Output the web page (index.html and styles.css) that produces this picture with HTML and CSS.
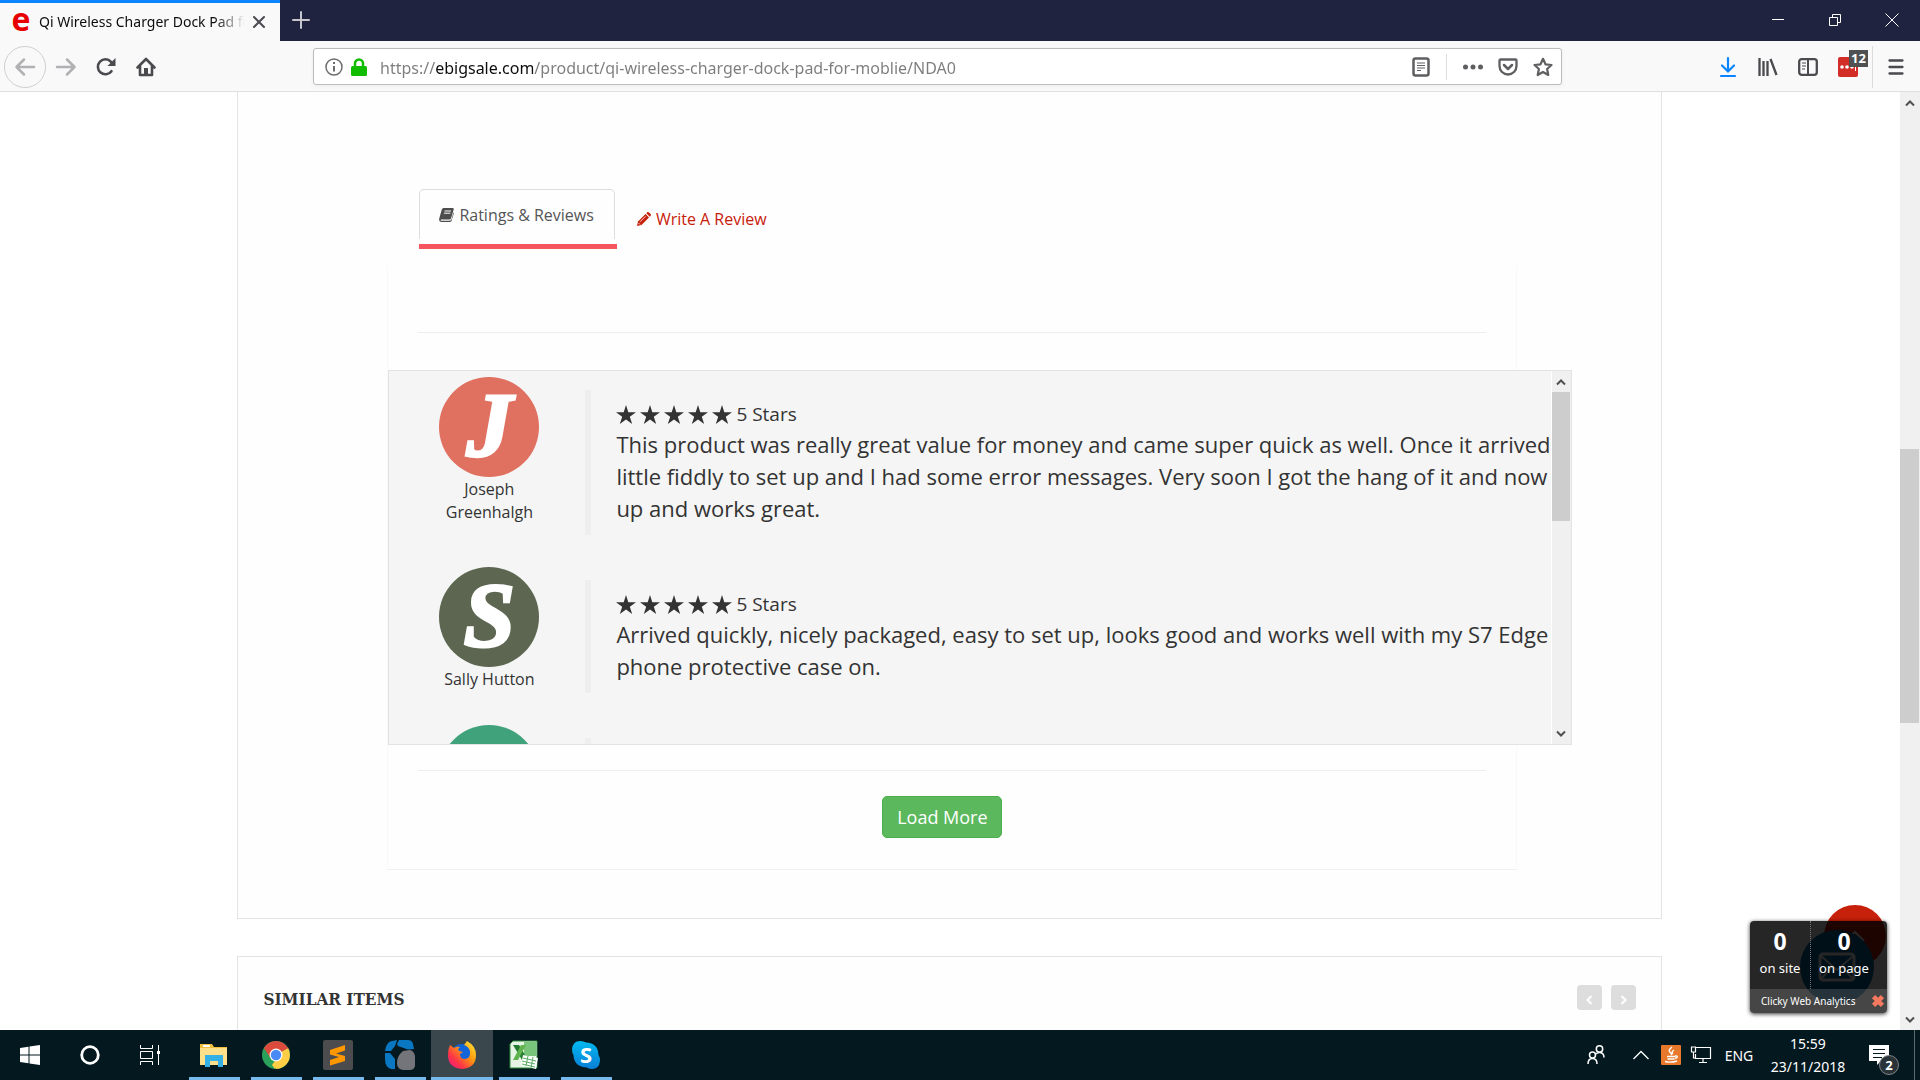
FILE: index.html
```
<!DOCTYPE html>
<html lang="en">
<head>
    <meta charset="UTF-8">
    <title>Qi Wireless Charger Dock Pad for Moblie</title>
    <link rel="stylesheet" href="styles.css">
</head>
<body>
    <svg class="sprites" aria-hidden="true">
        <symbol id="star" viewBox="0 0 20 20"><path d="M10 0l2.300 7.300H20l-6.200 4.400L16.200 19 10 14.500 3.800 19l2.400-7.300L0 7.300h7.700z"/></symbol>
        <symbol id="up" viewBox="0 0 10 8"><path d="M1 6.500l4-4 4 4" fill="none" stroke="#505050" stroke-width="2"/></symbol>
        <symbol id="down" viewBox="0 0 10 8"><path d="M1 1.500l4 4 4-4" fill="none" stroke="#505050" stroke-width="2"/></symbol>
    </svg>

    <!-- browser window -->
    <header class="titlebar">
        <div class="tab">
            <svg class="favicon" width="18" height="22" viewBox="0 0 18 22"><text x="9" y="20" text-anchor="middle">e</text></svg>
            <span class="tab-title">Qi Wireless Charger Dock Pad for</span>
            <button class="tab-close" aria-label="Close tab"><svg width="14" height="14" viewBox="0 0 14 14"><path d="M2 2l10 10M12 2L2 12" stroke="#4a4a4f" stroke-width="2" stroke-linecap="round"/></svg></button>
        </div>
        <button class="tab-new" aria-label="New tab"><svg width="20" height="20" viewBox="0 0 20 20"><path d="M10 2v16M2 10h16" stroke="#c6c6cc" stroke-width="2" stroke-linecap="round"/></svg></button>
        <div class="window-btns">
            <button aria-label="Minimize"><svg width="14" height="14" viewBox="0 0 14 14"><path d="M1 6.500h12" stroke="#fff"/></svg></button>
            <button aria-label="Restore"><svg width="14" height="14" viewBox="0 0 14 14"><path d="M1.500 4.500h8v8h-8zM4.500 4V1.500h8v8H10" fill="none" stroke="#fff"/></svg></button>
            <button aria-label="Close"><svg width="14" height="14" viewBox="0 0 14 14"><path d="M.5.5l13 13M13.500.5l-13 13" stroke="#fff"/></svg></button>
        </div>
    </header>

    <nav class="toolbar">
        <div class="nav-btns">
            <button class="back" aria-label="Back"><svg width="22" height="20" viewBox="0 0 22 20"><path d="M20 10H3M10 2.500L2.500 10l7.500 7.500" fill="none" stroke="#b1b1b3" stroke-width="2.500" stroke-linecap="round" stroke-linejoin="round"/></svg></button>
            <button aria-label="Forward"><svg width="22" height="20" viewBox="0 0 22 20"><path d="M2 10h17M12 2.500l7.500 7.500-7.500 7.500" fill="none" stroke="#b1b1b3" stroke-width="2.500" stroke-linecap="round" stroke-linejoin="round"/></svg></button>
            <button aria-label="Reload"><svg width="20" height="20" viewBox="0 0 20 20"><path d="M15.500 14.200A7.500 7.500 0 1 1 15 4.800" fill="none" stroke="#4a4a4f" stroke-width="2.600" stroke-linecap="round"/><path d="M19.500 1v8h-8z" fill="#4a4a4f"/></svg></button>
            <button aria-label="Home"><svg width="20" height="20" viewBox="0 0 20 20"><path d="M1.500 10.500L10 2l8.500 8.500M4 9.500V18h12V9.500" fill="none" stroke="#4a4a4f" stroke-width="2.600" stroke-linejoin="round" stroke-linecap="round"/><path d="M8 11h4v7H8z" fill="#4a4a4f"/></svg></button>
        </div>
        <div class="urlbar">
            <svg width="18" height="18" viewBox="0 0 18 18"><circle cx="9" cy="9" r="8" fill="none" stroke="#6d6d6f" stroke-width="1.500"/><path d="M9 8v5.500M9 4v2" stroke="#6d6d6f" stroke-width="2"/></svg>
            <svg class="lock" width="16" height="18" viewBox="0 0 16 18"><path d="M4 9V5.500a4 4 0 0 1 8 0V9" fill="none" stroke="#12bc00" stroke-width="2.500"/><rect y="8" width="16" height="10" rx="1.500" fill="#12bc00"/></svg>
            <input class="url" type="text" aria-label="Address" value="https://ebigsale.com/product/qi-wireless-charger-dock-pad-for-moblie/NDA0">
            <button aria-label="Reader view"><svg width="18" height="20" viewBox="0 0 18 20"><rect x="1.500" y="1.500" width="15" height="17" rx="2" fill="none" stroke="#5f5f62" stroke-width="2.500"/><path d="M5 6h8M5 8.500h8M5 11h8M5 13.500h4" stroke="#5f5f62"/></svg></button>
            <span class="url-sep"></span>
            <button aria-label="Page actions"><svg width="20" height="6" viewBox="0 0 20 6"><g fill="#5f5f62"><circle cx="2.500" cy="3" r="2.500"/><circle cx="10" cy="3" r="2.500"/><circle cx="17.500" cy="3" r="2.500"/></g></svg></button>
            <button aria-label="Save to Pocket"><svg width="20" height="18" viewBox="0 0 20 18"><path d="M2.500 1.500h15q1 0 1 1V8a8.500 8.500 0 0 1-17 0V2.500q0-1 1-1z" fill="none" stroke="#5f5f62" stroke-width="2.300"/><path d="M6 7l4 4 4-4" fill="none" stroke="#5f5f62" stroke-width="2.500" stroke-linecap="round" stroke-linejoin="round"/></svg></button>
            <button aria-label="Bookmark"><svg width="20" height="20" viewBox="0 0 20 20"><path d="M10 1.800l2.500 5.500 6 .7-4.400 4 1.200 6-5.300-3-5.300 3 1.200-6L1.500 8l6-.7z" fill="none" stroke="#5f5f62" stroke-width="2.200" stroke-linejoin="round"/></svg></button>
        </div>
        <div class="tool-btns">
            <button aria-label="Downloads"><svg width="16" height="20" viewBox="0 0 16 20"><path d="M8 1v13M2 8.500l6 6 6-6M1 19h14" fill="none" stroke="#0a84ff" stroke-width="2.200" stroke-linecap="round"/></svg></button>
            <button aria-label="Library"><svg width="20" height="18" viewBox="0 0 20 18"><path d="M1.500 0v18M5.500 3v15M9.500 3v15M12.500 1l6 16" stroke="#4a4a4f" stroke-width="2.300"/></svg></button>
            <button aria-label="Sidebars"><svg width="20" height="18" viewBox="0 0 20 18"><rect x="1.200" y="1.200" width="17.600" height="15.600" rx="2.500" fill="none" stroke="#4a4a4f" stroke-width="2.300"/><path d="M10 1v16" stroke="#4a4a4f" stroke-width="2"/><path d="M4 5h4M4 8h4M4 11h3" stroke="#4a4a4f"/></svg></button>
            <button class="addon" aria-label="Password manager"><svg width="20" height="20" viewBox="0 0 20 20"><rect width="20" height="20" rx="2" fill="#d32d27"/><g fill="#fff"><circle cx="4" cy="10" r="1.800"/><circle cx="9" cy="10" r="1.800"/><circle cx="14" cy="10" r="1.800"/><path d="M17 7h1v7h-1z"/></g></svg><span class="addon-count">12</span></button>
            <span class="tool-sep"></span>
            <button aria-label="Menu"><svg width="16" height="16" viewBox="0 0 16 16"><path d="M1.500 1.500h13M1.500 8h13M1.500 14.500h13" stroke="#4a4a4f" stroke-width="2.300" stroke-linecap="round"/></svg></button>
        </div>
    </nav>

    <!-- page -->
    <div class="viewport">
        <main class="page">
            <section class="card product">
                <ul class="tabs">
                    <li class="active"><a href="#reviews"><svg width="15" height="14" viewBox="0 0 15 14"><path d="M4.500 0H14q1 .3.700 1.500L12 10.500q-.3 1-1.500 1H2q-1 .5 0 1.200h9q1-.2 1.500-1.200l2-7.500.3 1.500-2.300 7.500q-.5 1-1.500 1H2Q-.2 13.500.1 11L2.800 1.500Q3.300.2 4.500 0z" fill="#4d4d4d"/><path d="M5.500 3h6.500M4.900 5.200h6.500" stroke="#fff"/></svg> Ratings &amp; Reviews</a></li>
                    <li><a href="#write"><svg width="14" height="14" viewBox="0 0 14 14"><path d="M0 14l1-4.500L8.500 2 12 5.500 4.500 13z" fill="#c7200b"/><path d="M9.300 1.200L10.500 0q.7-.2 1.300.3l2 2q.4.7 0 1.200l-1 1.200z" fill="#c7200b"/><path d="M3 9.800l5.500-5.500M1.500 11l1.500 1.500" stroke="#fff" stroke-width=".8"/></svg> Write A Review</a></li>
                </ul>
                <div class="panel" id="reviews">
                    <hr>
                    <div class="well">
                        <div class="reviews">
                            <article class="review">
                                <div class="author">
                                    <div class="avatar avatar-j">J</div>
                                    <p>Joseph Greenhalgh</p>
                                </div>
                                <div class="quote">
                                    <div class="stars">
                                        <svg><use href="#star"/></svg><svg><use href="#star"/></svg><svg><use href="#star"/></svg><svg><use href="#star"/></svg><svg><use href="#star"/></svg>
                                        <span>5 Stars</span>
                                    </div>
                                    <p>This product was really great value for money and came super quick as well. Once it arrived<br>little fiddly to set up and I had some error messages. Very soon I got the hang of it and now<br>up and works great.</p>
                                </div>
                            </article>
                            <article class="review">
                                <div class="author">
                                    <div class="avatar avatar-s">S</div>
                                    <p>Sally Hutton</p>
                                </div>
                                <div class="quote">
                                    <div class="stars">
                                        <svg><use href="#star"/></svg><svg><use href="#star"/></svg><svg><use href="#star"/></svg><svg><use href="#star"/></svg><svg><use href="#star"/></svg>
                                        <span>5 Stars</span>
                                    </div>
                                    <p>Arrived quickly, nicely packaged, easy to set up, looks good and works well with my S7 Edge<br>phone protective case on.</p>
                                </div>
                            </article>
                            <article class="review">
                                <div class="author"><div class="avatar avatar-g"></div></div>
                                <div class="quote"></div>
                            </article>
                        </div>
                        <div class="scrollbar">
                            <button aria-label="Scroll up"><svg width="10" height="8"><use href="#up"/></svg></button>
                            <div class="track"><div class="thumb well-thumb"></div></div>
                            <button aria-label="Scroll down"><svg width="10" height="8"><use href="#down"/></svg></button>
                        </div>
                    </div>
                    <hr>
                    <button class="btn-load">Load More</button>
                </div>
            </section>

            <section class="card similar">
                <h2>SIMILAR ITEMS</h2>
                <div class="pager">
                    <button aria-label="Previous"><svg width="7" height="10" viewBox="0 0 7 10"><path d="M5.500 1l-4 4 4 4" fill="none" stroke="#fff" stroke-width="2"/></svg></button>
                    <button aria-label="Next"><svg width="7" height="10" viewBox="0 0 7 10"><path d="M1.500 1l4 4-4 4" fill="none" stroke="#fff" stroke-width="2"/></svg></button>
                </div>
            </section>
        </main>
        <div class="scrollbar page-scroll">
            <button aria-label="Scroll up"><svg width="10" height="8"><use href="#up"/></svg></button>
            <div class="track"><div class="thumb page-thumb"></div></div>
            <button aria-label="Scroll down"><svg width="10" height="8"><use href="#down"/></svg></button>
        </div>

        <a class="to-top" href="#" aria-label="Back to top"><svg width="20" height="12" viewBox="0 0 20 12"><path d="M1 11l9-9 9 9" fill="none" stroke="#fff" stroke-width="2"/></svg></a>
        <a class="contact" href="#" aria-label="Contact us"><svg width="38" height="30" viewBox="0 0 38 30"><rect x="2" y="2" width="34" height="26" rx="3" fill="none" stroke="#fff" stroke-width="3"/><path d="M3 4l16 14L35 4M3 27l11-12M35 27L24 15" fill="none" stroke="#fff" stroke-width="2"/></svg></a>
        <div class="clicky">
            <div class="counts">
                <div><b>0</b><span>on site</span></div>
                <div><b>0</b><span>on page</span></div>
            </div>
            <div class="clicky-foot">
                <a href="#">Clicky Web Analytics</a>
                <button aria-label="Close"><svg width="14" height="14" viewBox="0 0 12 12"><path d="M2.200 2.200l7.600 7.600M9.800 2.200L2.200 9.800" stroke="#f4795f" stroke-width="4"/></svg></button>
            </div>
        </div>
    </div>

    <!-- desktop taskbar -->
    <footer class="taskbar">
        <div class="system">
            <button aria-label="Start"><svg width="20" height="20" viewBox="0 0 20 20"><path d="M0 3l8.500-1.200v7.700H0zM9.500 1.600L20 0v9.500H9.500zM0 10.500h8.500v7.700L0 17zM9.500 10.500H20V20L9.500 18.400z" fill="#fff"/></svg></button>
            <button aria-label="Search"><svg width="20" height="20" viewBox="0 0 20 20"><circle cx="10" cy="10" r="8.300" fill="none" stroke="#fff" stroke-width="2.800"/></svg></button>
            <button aria-label="Task view"><svg width="20" height="20" viewBox="0 0 20 20"><path d="M.5 0v3.500h12V0M.5 20v-3.500h12V20M.5 6.500h12v7H.5zM18.500 0v20" fill="none" stroke="#fff"/><path d="M17 6h3v3h-3z" fill="#fff"/></svg></button>
        </div>
        <div class="apps">
            <button aria-label="File Explorer"><svg width="28" height="24" viewBox="0 0 28 24"><path d="M0 1h12l2 3h13v18H0z" fill="#f0bf3b"/><path d="M3 2h7v2H3z" fill="#fff"/><path d="M0 5h27v17H0z" fill="#ffe08a"/><path d="M5 12h18v12h-5v-6h-8v6H5z" fill="#35b0e6"/></svg></button>
            <button aria-label="Chrome"><svg width="28" height="28" viewBox="0 0 28 28"><circle cx="14" cy="14" r="14" fill="#2aa15a"/><path d="M14 14L1.900 7A14 14 0 0 1 26.100 7z" fill="#dc4a3d"/><path d="M14 14L26.100 7A14 14 0 0 1 14 28z" fill="#ffce44"/><path d="M8.500 17L1.900 7 14 7.500h13l-1-1z" fill="#dc4a3d"/><path d="M20 16.500L13 28l-3-4 5-7z" fill="#ffce44"/><circle cx="14" cy="14" r="6.500" fill="#fff"/><circle cx="14" cy="14" r="5.200" fill="#4a8af4"/></svg></button>
            <button aria-label="Sublime Text"><svg width="30" height="30" viewBox="0 0 30 30"><rect width="30" height="30" rx="2" fill="#4c4c4e"/><path d="M7 10l15-5v5.500L13 13.500l9 2.500v5L7 25.500V20l9-3-9-2.500z" fill="#ff9800"/></svg></button>
            <button aria-label="App"><svg width="30" height="30" viewBox="0 0 30 30"><path d="M5 1.500L12 0l-2 6-4 5H0q1-7 5-9.500zM14 0h9q4 0 5 4l1 5-6 .5L13 6l-1-2zM0 13h5l5 6v10H6Q0 27 0 19z" fill="#0a77c2"/><path d="M18 11l7-1q4 1 5 6v10q-1 4-5 4h-7q-6-1-6-7 0-7 6-12z" fill="#74757a"/></svg></button>
            <button class="on" aria-label="Firefox"><svg width="28" height="28" viewBox="0 0 28 28"><defs><linearGradient id="fx" x1="1" y1="0" x2="0" y2="1"><stop offset="0" stop-color="#fff03c"/><stop offset=".4" stop-color="#ff980e"/><stop offset=".7" stop-color="#ff3647"/><stop offset="1" stop-color="#e31587"/></linearGradient></defs><circle cx="14" cy="14" r="11" fill="#1265d8"/><path d="M2 4l4 3q3-2 6-1-3 2-1 4l4 1-3 2q0 5 5 5 6-1 5-8Q20 5 16 4l3-4q9 5 9 14 0 13-14 14Q0 27 0 14 0 8 2 4z" fill="url(#fx)"/></svg></button>
            <button aria-label="Excel"><svg width="28" height="28" viewBox="0 0 28 28"><path d="M3 0h24v27H0V3z" fill="#e6f4e5"/><path d="M14 1h12v14H14z" fill="#78c47a"/><path d="M0 3l3-3h24v27H0z" fill="none" stroke="#2f8a3c"/><path d="M3 4h6l9 15h-6z" fill="#237a31"/><path d="M16 4h-5L3 19h5z" fill="#61b34e"/><path d="M13 14l15 3-2 11-15-4z" fill="#fff"/><path d="M13 17l13 3M12 20l13 3M12 23l13 3M18 15l-2 10M23 16l-2 11" stroke="#58ac63"/></svg></button>
            <button aria-label="Skype"><svg width="28" height="28" viewBox="0 0 28 28"><defs><linearGradient id="sk" x1="0" y1="0" x2="0" y2="1"><stop offset="0" stop-color="#00b9f0"/><stop offset="1" stop-color="#0a7ed8"/></linearGradient></defs><path d="M8 0q4 0 6 1.500Q26 2 26.500 14q1.500 2 1.500 6-1 8-8 8-3 0-5-1.500Q2 26 1.500 14 0 12 0 8q1-8 8-8z" fill="url(#sk)"/><text x="14" y="22" text-anchor="middle" class="skype-s">S</text></svg></button>
        </div>
        <div class="tray">
            <button aria-label="People"><svg width="18" height="20" viewBox="0 0 18 20"><g fill="none" stroke="#fff" stroke-width="1.500"><circle cx="12.500" cy="4" r="3.200"/><circle cx="5.500" cy="10" r="3"/><path d="M1 19q0-5.500 4.500-5.500T10 19M9 9q2-2 4-1.500 4 .5 4 5"/></g></svg></button>
            <button aria-label="Hidden icons"><svg width="16" height="10" viewBox="0 0 16 10"><path d="M.5 9L8 1.500 15.500 9" fill="none" stroke="#fff" stroke-width="1.300"/></svg></button>
            <button aria-label="Java"><svg width="20" height="20" viewBox="0 0 20 20"><rect width="20" height="20" rx="1" fill="#e8782a"/><path d="M11 2q-5 4-1 6 1 1 0 2M13 5q-3 2-1 4M6 11.500h8M6.500 14h7M4 16.500q6 1.500 12-.5M14 11q3-.5 2 1.500l-2 1" fill="none" stroke="#fff" stroke-width="1.400"/></svg></button>
            <button aria-label="Network"><svg width="20" height="18" viewBox="0 0 20 18"><path d="M5 1.500h14.500v11h-15V8M8 16.500h8M12 13v3M.5 1h4v5h-4zM2.500 6v6H5" fill="none" stroke="#fff" stroke-width="1.200"/></svg></button>
            <button class="lang">ENG</button>
            <button class="clock"><span>15:59</span><span>23/11/2018</span></button>
            <button class="notes" aria-label="Notifications"><svg width="20" height="20" viewBox="0 0 20 20"><path d="M0 0h20v16h-8l-4 4v-4H0z" fill="#fff"/><path d="M4 4.500h12M4 8.500h12M4 12.500h9" stroke="#04181f"/></svg><span class="notes-count">2</span></button>
            <span class="show-desktop"></span>
        </div>
    </footer>
</body>
</html>
```
FILE: styles.css
```
*{
    margin: 0;
    padding: 0;
    box-sizing: border-box;
}
body{
    display: flex;
    flex-direction: column;
    height: 100vh;
    overflow: hidden;
    font-family: "Open Sans", "Noto Sans", sans-serif;
    font-size: 16px;
    color: #333;
    background: #fff;
}
button{
    display: flex;
    align-items: center;
    justify-content: center;
    border: 0;
    background: none;
    font: inherit;
    color: inherit;
    cursor: pointer;
}
a{
    text-decoration: none;
    color: inherit;
}
ul{
    list-style: none;
}
svg{
    overflow: visible;
}
.sprites{
    display: none;
}

/* title bar */
.titlebar{
    display: flex;
    height: 41px;
    background: #202340;
}
.tab{
    display: flex;
    align-items: center;
    width: 280px;
    padding: 0 11px 0 12px;
    background: #f9f9fa;
    border-top: 3px solid #0a84ff;
}
.favicon{
    margin-right: 9px;
    font: bold 32px "Open Sans", sans-serif;
    fill: #e60000;
}
.tab-title{
    flex: 1;
    overflow: hidden;
    white-space: nowrap;
    font: 14px/20px "Noto Sans", sans-serif;
    color: #0c0c0d;
    -webkit-mask-image: linear-gradient(to left, transparent, #000 30px);
    mask-image: linear-gradient(to left, transparent, #000 30px);
}
.tab-close{
    margin-left: 4px;
    width: 20px;
    height: 20px;
}
.tab-new{
    width: 42px;
    height: 40px;
}
.window-btns{
    display: flex;
    margin-left: auto;
}
.window-btns button{
    width: 57px;
    height: 40px;
}

/* toolbar */
.toolbar{
    display: flex;
    align-items: center;
    height: 51px;
    padding-top: 1px;
    background: #f9f9fa;
    border-bottom: 1px solid #e0e0e1;
}
.nav-btns{
    display: flex;
    align-items: center;
    width: 313px;
    padding-left: 4px;
}
.nav-btns button{
    width: 40px;
    height: 40px;
}
.nav-btns .back{
    width: 42px;
    height: 42px;
    border: 1px solid #d0d0d2;
    border-radius: 50%;
}
.urlbar{
    display: flex;
    align-items: center;
    flex: 1;
    height: 37px;
    padding: 0 8px 0 11px;
    background: #fff;
    border: 1px solid #bcbcbd;
    border-radius: 3px;
    box-shadow: 0 1px 4px rgba(0,0,0,.05);
}
.urlbar .lock{
    margin: 0 13px 0 8px;
}
.url{
    flex: 1;
    padding-top: 2px;
    border: 0;
    outline: 0;
    font: 16px/24px "Noto Sans", sans-serif;
    color: transparent;
    /* host part in black, the rest grey */
    background: linear-gradient(to right, #7c7c7e 56px, #0c0c0d 56px, #0c0c0d 153px, #7c7c7e 153px);
    -webkit-background-clip: text;
    background-clip: text;
}
.urlbar button{
    width: 35px;
    height: 35px;
}
.urlbar .url-sep{
    width: 1px;
    height: 26px;
    margin: 0 8px;
    background: #dcdcdd;
}
.urlbar button:last-child{
    width: 20px;
    margin-left: 8px;
}
.tool-btns{
    display: flex;
    align-items: center;
    width: 358px;
    padding-right: 4px;
    justify-content: flex-end;
}
.tool-btns button{
    width: 40px;
    height: 42px;
}
.addon{
    position: relative;
}
.addon-count{
    position: absolute;
    left: 21px;
    top: 4px;
    width: 19px;
    background: #4f5052;
    color: #fff;
    font: bold 13px/17px "Noto Sans", sans-serif;
}
.tool-sep{
    width: 1px;
    height: 42px;
    margin: 0 3px 0 4px;
    background: #dcdcdd;
}

/* page */
.viewport{
    position: relative;
    display: flex;
    flex: 1;
    min-height: 0;
}
.page{
    flex: 1;
    overflow: hidden;
    padding-right: 1px;
}
.card{
    width: 75%;
    margin: 0 auto;
    background: #fefefe;
    border: 1px solid #e3e3e3;
}
.product{
    border-top: 0;
    padding: 97px 144px 48px 149px;
}
.tabs{
    display: flex;
    padding-left: 32px;
}
.tabs a{
    display: flex;
    align-items: center;
    gap: 5px;
    height: 50px;
    padding: 10px 20px 0;
    line-height: 24px;
    color: #c7200b;
}
.tabs .active{
    border-bottom: 5px solid #f5565d;
    padding: 0 2px 5px 0;
}
.tabs .active a{
    padding: 0 20px 0 19px;
    color: #555;
    border: 1px solid #ddd;
    border-bottom: 0;
    border-radius: 5px 5px 0 0;
}
.panel{
    margin-top: 17px;
    border: 1px solid #f9f9f9;
    border-top: 0;
    border-bottom-color: #f0f0f0;
    padding-top: 66px;
    padding-bottom: 31px;
}
.panel hr{
    margin: 0 30px;
    border: 0;
    border-top: 1px solid #eee;
}
.well{
    display: flex;
    height: 375px;
    margin: 37px -56px 25px 0;
    background: #f5f5f5;
    border: 1px solid #e3e3e3;
}
.reviews{
    flex: 1;
    min-width: 0;
    overflow: hidden;
    padding-top: 6px;
}
.review{
    display: flex;
    gap: 46px;
    padding-left: 50px;
}
.author{
    width: 100px;
    text-align: center;
    line-height: 23px;
}
.author p{
    padding-top: 1px;
}
.avatar{
    height: 100px;
    border-radius: 50%;
    color: #fff;
    font: italic bold 92px/96px "Liberation Serif", serif;
    -webkit-text-stroke: 3px #fff;
}
.avatar-j{
    background: #e07060;
}
.avatar-s{
    background: #5c6650;
}
.avatar-g{
    background: #3fa27b;
}
.quote{
    flex: 1;
    min-width: 0;
    margin: 13px 0 32px;
    padding: 11px 0 11px 25px;
    border-left: 6px solid #eee;
}
.stars{
    display: flex;
    align-items: center;
    gap: 4px;
    height: 27px;
}
.stars svg{
    width: 20px;
    height: 20px;
    fill: #333;
}
.stars span{
    font-size: 19px;
    line-height: 27px;
}
.quote p{
    font-size: 22px;
    line-height: 32px;
    white-space: nowrap;
}
.btn-load{
    width: 120px;
    height: 42px;
    margin: 25px auto 0 494px;
    color: #fff;
    font-size: 18px;
    background: #5cb85c;
    border: 1px solid #4cae4c;
    border-radius: 5px;
}

.similar{
    display: flex;
    justify-content: space-between;
    margin-top: 37px;
    padding: 28px 25px 40px;
}
.similar h2{
    font: bold 17px/28px "DejaVu Serif Condensed", "DejaVu Serif", serif;
}
.pager{
    display: flex;
    gap: 9px;
}
.pager button{
    width: 25px;
    height: 25px;
    padding-top: 4px;
    background: #ddd;
    border-radius: 4px;
}

/* scroll bars */
.scrollbar{
    display: flex;
    flex-direction: column;
    width: 20px;
    background: #f0f0f0;
    border-left: 1px solid #fff;
}
.scrollbar button{
    height: 21px;
}
.track{
    flex: 1;
    padding-right: 1px;
}
.thumb{
    background: #cdcdcd;
}
.well-thumb{
    height: 39%;
}
.page-scroll{
    border-left: 0;
}
.page-scroll .track{
    padding: 336px 1px 0 0;
}
.page-thumb{
    height: 49%;
}

/* floating widgets */
.to-top, .contact{
    position: absolute;
    display: flex;
    align-items: center;
    justify-content: center;
    border-radius: 50%;
}
.to-top{
    right: 34px;
    bottom: 63px;
    width: 62px;
    height: 62px;
    background: #c7200b;
}
.contact{
    right: 46px;
    bottom: 26px;
    width: 74px;
    height: 74px;
    background: #006ba8;
}
.clicky{
    position: absolute;
    right: 33px;
    bottom: 17px;
    width: 137px;
    border-radius: 4px;
    overflow: hidden;
    background: rgba(0,0,0,.85);
    box-shadow: 0 1px 4px rgba(0,0,0,.8);
    color: #fff;
    font-family: "Noto Sans", sans-serif;
}
.counts{
    display: flex;
    height: 68px;
}
.counts div{
    flex: 1;
    display: flex;
    flex-direction: column;
    align-items: center;
    padding: 5px 10px 0 0;
    font-size: 13px;
    line-height: 22px;
    white-space: nowrap;
}
.counts div:first-child{
    flex: 0 0 61px;
    padding-right: 0;
    border-right: 1px dotted #777;
}
.counts b{
    font-size: 23px;
    line-height: 31px;
}
.clicky-foot{
    display: flex;
    align-items: center;
    justify-content: space-between;
    height: 24px;
    padding: 0 2px 0 11px;
    background: rgba(255,255,255,.15);
    font-size: 10px;
}

/* taskbar */
.taskbar{
    display: flex;
    height: 50px;
    background: #04181f;
    color: #fff;
    font: 14px/23px "Noto Sans", sans-serif;
}
.system, .apps, .tray{
    display: flex;
}
.system{
    width: 183px;
}
.system button{
    width: 60px;
}
.apps button{
    position: relative;
    width: 62px;
}
.apps button::after{
    content: "";
    position: absolute;
    left: 6px;
    right: 5px;
    bottom: 0;
    height: 3px;
    background: #76b9ed;
}
.apps .on{
    background: #3a474d;
}
.apps .on::after{
    left: 0;
    right: 0;
}
.skype-s{
    font: bold 22px "Open Sans", sans-serif;
    fill: #fff;
}
.tray{
    margin-left: auto;
}
.tray button{
    width: 30px;
}
.tray button:first-child{
    margin-right: 15px;
}
.tray .lang{
    width: 46px;
}
.tray .clock{
    flex-direction: column;
    width: 92px;
}
.tray .notes{
    position: relative;
    width: 50px;
    margin-right: 10px;
}
.notes-count{
    position: absolute;
    right: 5px;
    bottom: 5px;
    width: 20px;
    height: 20px;
    border: 1px solid #80868a;
    border-radius: 50%;
    background: #2a3337;
    font: bold 13px/18px "Noto Sans", sans-serif;
}
.show-desktop{
    width: 6px;
    border-left: 1px solid #5d6a70;
}
```
